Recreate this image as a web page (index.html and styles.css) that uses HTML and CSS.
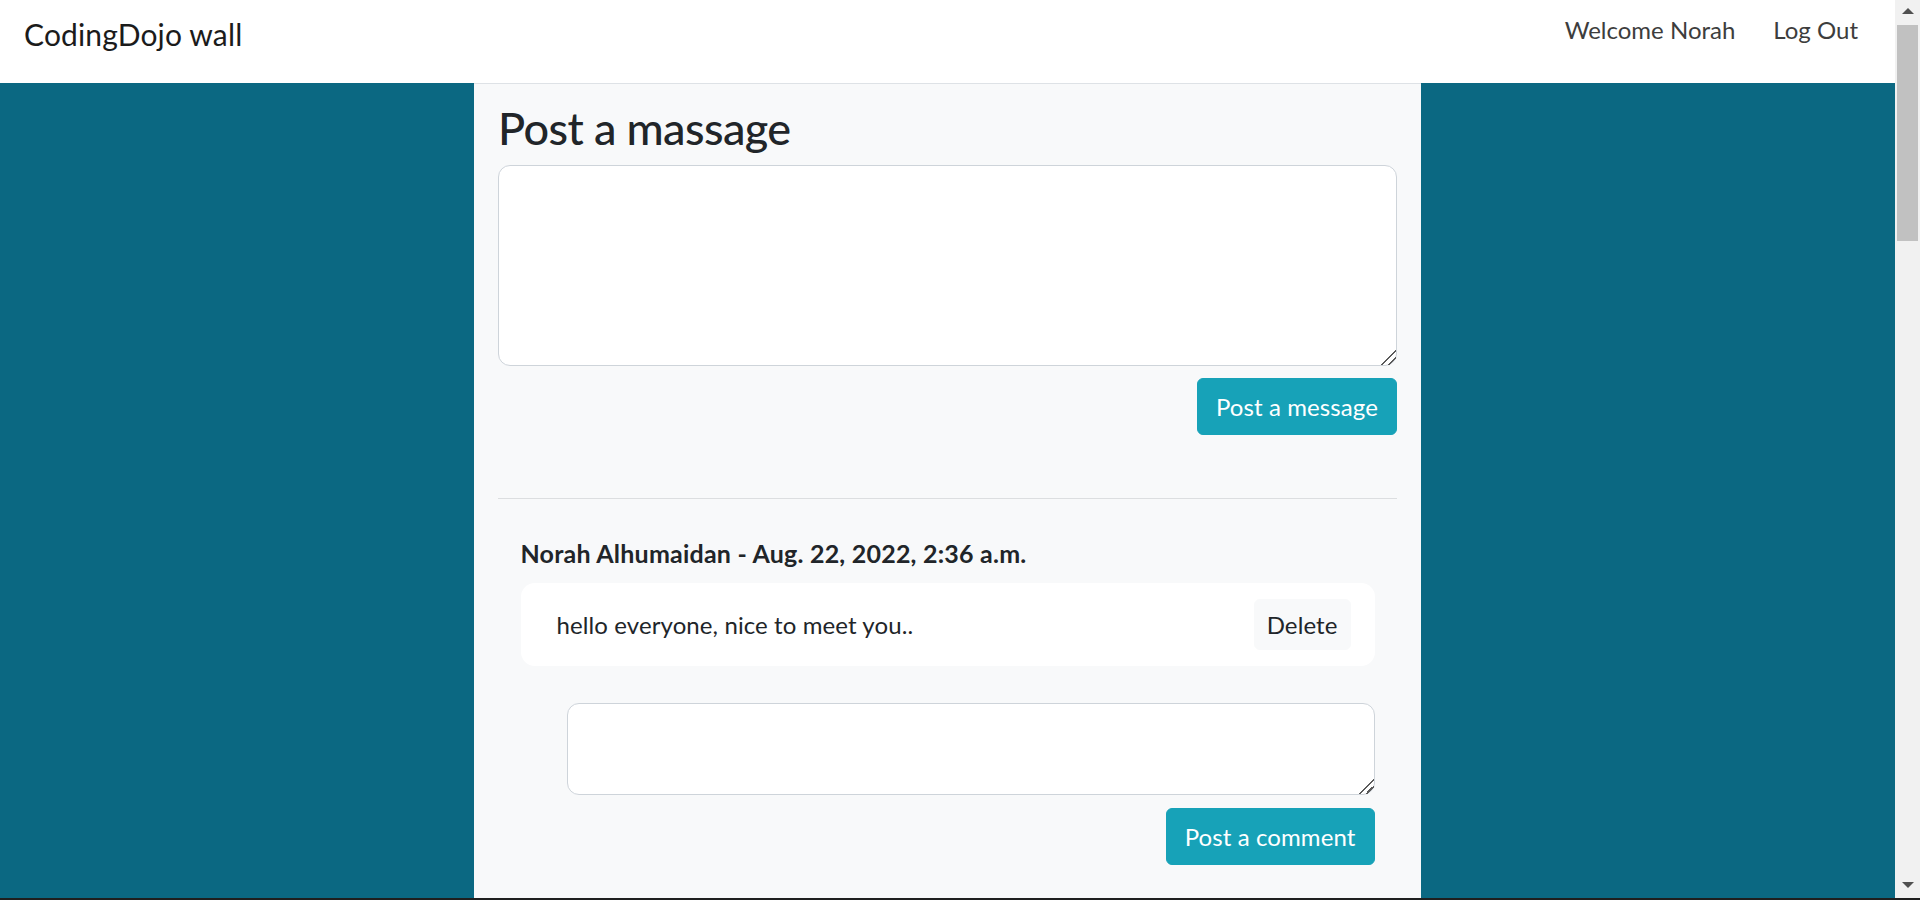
FILE: index.html
```html
<!DOCTYPE html>
<html lang="en">
<head>
<meta charset="utf-8">
<title>CodingDojo wall</title>
<link rel="stylesheet" href="styles.css">
</head>
<body>
<div class="screen">
  <div class="window">
    <div class="page">
      <nav class="navbar">
        <a class="brand" href="#">CodingDojo wall</a>
        <ul class="nav">
          <li><a class="nav-link" href="#">Welcome Norah</a></li>
          <li><a class="nav-link" href="#">Log Out</a></li>
        </ul>
      </nav>
      <main class="container">
        <h2 class="title">Post a massage</h2>
        <form class="post-form">
          <textarea class="field field-lg"></textarea>
          <div class="actions">
            <button type="button" class="btn btn-info">Post a message</button>
          </div>
        </form>
        <hr class="divider">
        <section class="post">
          <h6 class="post-meta">Norah Alhumaidan - Aug. 22, 2022, 2:36 a.m.</h6>
          <div class="message">
            <p class="message-text">hello everyone, nice to meet you..</p>
            <button type="button" class="btn btn-light">Delete</button>
          </div>
          <form class="comment-form">
            <textarea class="field field-sm"></textarea>
            <div class="actions">
              <button type="button" class="btn btn-info">Post a comment</button>
            </div>
          </form>
        </section>
      </main>
    </div>
    <div class="scrollbar">
      <div class="sb-btn sb-up"></div>
      <div class="sb-thumb"></div>
      <div class="sb-track"></div>
      <div class="sb-btn sb-down"></div>
    </div>
  </div>
  <div class="taskbar-edge"></div>
</div>
</body>
</html>
```
FILE: styles.css
```css
* { box-sizing: border-box; }

html, body {
  margin: 0;
  height: 900px;
  overflow: hidden;
}

body {
  font-family: Lato, "Segoe UI", sans-serif;
  color: #212529;
  background: #1f1f1f;
}

.screen {
  display: flex;
  flex-direction: column;
  height: 900px;
}

.window {
  display: flex;
  height: 898px;
}

.page {
  flex: 1;
  display: flex;
  flex-direction: column;
  background: #0b6882;
  overflow: hidden;
}

.navbar {
  flex: none;
  height: 83px;
  background: #fff;
  display: flex;
  align-items: flex-start;
  justify-content: space-between;
  padding: 12px 25px 0 24px;
}

.brand {
  font-size: 30px;
  line-height: 45px;
  letter-spacing: 0.15px;
  color: #1b1b1b;
  text-decoration: none;
}

.nav {
  display: flex;
  list-style: none;
  margin: 0;
  padding: 0;
  gap: 14px;
}

.nav-link {
  display: block;
  padding: 0 12px;
  font-size: 24px;
  line-height: 36px;
  color: #3d3d3d;
  text-decoration: none;
}

.container {
  width: 947px;
  margin: 0 auto;
  flex: 1 0 auto;
  background: #f8f9fa;
  border-top: 1px solid #dee2e6;
  padding: 17px 24px 0;
}

.title {
  font-size: 45px;
  line-height: 54px;
  font-weight: 500;
  letter-spacing: -0.6px;
  margin: 0 0 10px;
}

.post-form, .comment-form { margin-bottom: 0; }

.field {
  display: block;
  width: 100%;
  border: 1px solid #ced4da;
  border-radius: 12px;
  background: #fff;
  font: inherit;
  resize: vertical;
  margin: 0;
}

.field::-webkit-resizer {
  background: linear-gradient(135deg,
    transparent 0 48%, #5a5a5a 48% 56%, transparent 56% 70%,
    #5a5a5a 70% 78%, transparent 78%);
}

.field-lg { height: 201px; }
.field-sm { height: 92px; }

.actions {
  display: flex;
  justify-content: flex-end;
}

.post-form .actions { margin-top: 12px; }
.comment-form .actions { margin-top: 13px; }

.btn {
  font-family: inherit;
  font-size: 24px;
  line-height: 36px;
  letter-spacing: 0.1px;
  border: 1px solid transparent;
  border-radius: 6px;
  padding: 9.5px 18px;
  cursor: pointer;
}

.btn-info {
  background: #17a2b8;
  border-color: #17a2b8;
  color: #fff;
}

.btn-light {
  background: #f8f9fa;
  border-color: #f8f9fa;
  color: #212529;
  padding: 6.5px 12px;
}

.divider {
  border: 0;
  border-top: 1px solid #dcdee0;
  margin: 63px 0 0;
}

.post {
  padding: 40px 22.5px 0;
}

.post-meta {
  font-size: 25px;
  line-height: 29px;
  font-weight: 700;
  letter-spacing: 0.22px;
  margin: 0 0 15px;
}

.message {
  display: flex;
  align-items: center;
  justify-content: space-between;
  background: #fff;
  border-radius: 14px;
  padding: 16px 24px 16px 36px;
}

.message-text {
  margin: 0;
  font-size: 24px;
  line-height: 36px;
  letter-spacing: 0.1px;
}

.comment-form {
  margin: 37px 0 0 46.5px;
}

.scrollbar {
  width: 25px;
  flex: none;
  background: #f1f1f1;
  display: flex;
  flex-direction: column;
}

.sb-btn {
  height: 25px;
  flex: none;
  display: flex;
  justify-content: center;
}

.sb-up::before,
.sb-down::before {
  content: "";
  width: 0;
  height: 0;
  border-left: 6px solid transparent;
  border-right: 6px solid transparent;
}

.sb-up::before {
  margin-top: 8px;
  border-bottom: 6px solid #505050;
}

.sb-down::before {
  margin-top: 9px;
  border-top: 6px solid #505050;
}

.sb-thumb {
  height: 216px;
  flex: none;
  margin: 0 2px;
  background: #c1c1c1;
}

.sb-track { flex: 1; }

.taskbar-edge {
  height: 2px;
  background: #1f1f1f;
}
```
